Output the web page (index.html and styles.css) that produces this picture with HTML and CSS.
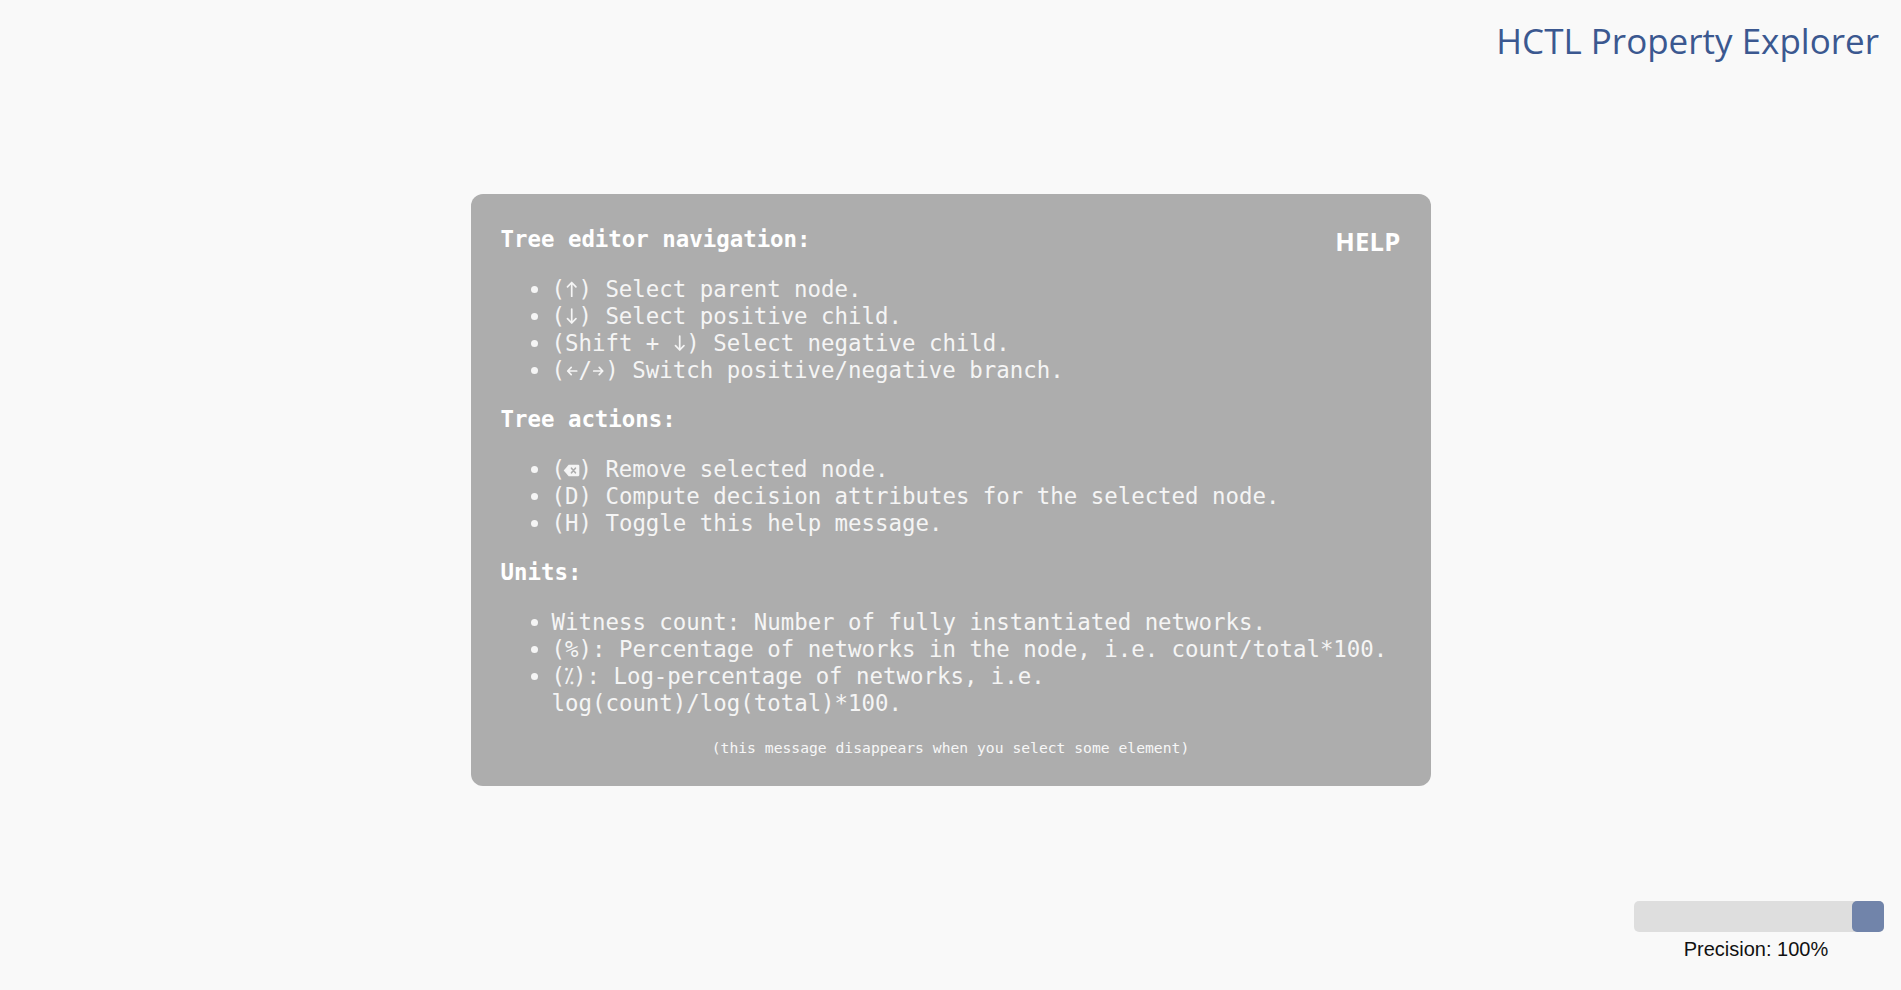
FILE: index.html
```html
<!DOCTYPE html>
<html lang="en">
<head>
<meta charset="utf-8">
<title>HCTL Property Explorer</title>
<link rel="stylesheet" href="styles.css">
</head>
<body>
<div class="page">
  <header class="header">
    <h1 class="app-title">HCTL Property Explorer</h1>
  </header>
  <main class="main">
    <section class="help">
      <div class="help-head">
        <h3 class="help-heading">Tree editor navigation:</h3>
        <span class="help-badge">HELP</span>
      </div>
      <ul class="help-list">
        <li>(<svg class="arrow" viewBox="0 0 12 16" aria-label="↑"><path d="M6 15.5 V1.5 M1.8 5.8 L6 1.5 L10.2 5.8"/></svg>) Select parent node.</li>
        <li>(<svg class="arrow" viewBox="0 0 12 16" aria-label="↓"><path d="M6 1 V15 M1.8 10.7 L6 15 L10.2 10.7"/></svg>) Select positive child.</li>
        <li>(Shift + <svg class="arrow" viewBox="0 0 12 16" aria-label="↓"><path d="M6 1 V15 M1.8 10.7 L6 15 L10.2 10.7"/></svg>) Select negative child.</li>
        <li>(<svg class="arrow" viewBox="0 0 12 16" aria-label="←"><path d="M11 9 H2 M5.5 5.3 L2 9 L5.5 12.7"/></svg>/<svg class="arrow" viewBox="0 0 12 16" aria-label="→"><path d="M1 9 H10 M6.5 5.3 L10 9 L6.5 12.7"/></svg>) Switch positive/negative branch.</li>
      </ul>
      <h3 class="help-heading">Tree actions:</h3>
      <ul class="help-list">
        <li>(<span class="key-icon"><svg viewBox="0 0 24 18" width="17" height="13"><path d="M8 1 H21.5 a1.5 1.5 0 0 1 1.5 1.5 V15.5 a1.5 1.5 0 0 1 -1.5 1.5 H8 L1 9 Z" fill="currentColor"/><path d="M12 5.8 L17.5 12.2 M17.5 5.8 L12 12.2" stroke="#adadad" stroke-width="2.4" stroke-linecap="round"/></svg></span>) Remove selected node.</li>
        <li>(D) Compute decision attributes for the selected node.</li>
        <li>(H) Toggle this help message.</li>
      </ul>
      <h3 class="help-heading">Units:</h3>
      <ul class="help-list">
        <li>Witness count: Number of fully instantiated networks.</li>
        <li>(%): Percentage of networks in the node, i.e. count/total*100.</li>
        <li>(⁒): Log-percentage of networks, i.e. log(count)/log(total)*100.</li>
      </ul>
      <p class="help-note">(this message disappears when you select some element)</p>
    </section>
  </main>
  <footer class="footer">
    <div class="precision">
      <div class="slider-track"><div class="slider-thumb"></div></div>
      <div class="precision-label">Precision: 100%</div>
    </div>
  </footer>
</div>
</body>
</html>
```

FILE: styles.css
```css
html, body {
  margin: 0;
  padding: 0;
}

body {
  background: #f9f9f9;
  font-family: "Open Sans", "Noto Sans", sans-serif;
}

.page {
  height: 100vh;
  display: flex;
  flex-direction: column;
  overflow: hidden;
}

.header {
  display: flex;
  justify-content: flex-end;
  padding: 18px 22px 0 0;
}

.app-title {
  margin: 0;
  font-family: "Open Sans", "Noto Sans", sans-serif;
  font-weight: 400;
  font-size: 35px;
  line-height: 46px;
  color: #3b5890;
}

.main {
  flex: 1;
  display: flex;
  justify-content: center;
  align-items: flex-start;
  padding-top: 130px;
}

.help {
  box-sizing: border-box;
  width: 960px;
  background: #adadad;
  border-radius: 12px;
  padding: 32.3px 30px 29.6px 30px;
  color: #f5f5f5;
  font-family: "DejaVu Sans Mono", "Liberation Mono", monospace;
  font-size: 22.4px;
  line-height: 27.05px;
}

.help-head {
  display: flex;
  justify-content: space-between;
  align-items: flex-start;
}

.help-heading {
  margin: 0;
  font-size: 22.4px;
  font-weight: 700;
  color: #ffffff;
  line-height: 27.05px;
}

.help-badge {
  font-family: "Open Sans", "Noto Sans", sans-serif;
  font-weight: 700;
  font-size: 25.6px;
  line-height: 26px;
  margin-top: 3px;
  margin-bottom: -3px;
  color: #ffffff;
  letter-spacing: 0.2px;
}

.help-list {
  margin: 22.4px 0;
  padding-left: 51px;
}

.help-list li {
  line-height: 27.05px;
}

.arrow {
  display: inline-block;
  width: 0.6em;
  height: 16px;
  vertical-align: 0;
  fill: none;
  stroke: currentColor;
  stroke-width: 1.7;
  stroke-linecap: round;
  stroke-linejoin: round;
}

.key-icon {
  display: inline-block;
  width: 0.6em;
  text-align: center;
  vertical-align: 0;
}

.key-icon svg {
  display: inline-block;
  margin-left: -2px;
  margin-right: -2px;
}

.help-note {
  margin: 20.6px 0 0 0;
  text-align: center;
  font-size: 14.7px;
  line-height: 17.6px;
  color: #f7f7f7;
}

.footer {
  display: flex;
  justify-content: flex-end;
  padding: 0 17px 29px 0;
}

.precision {
  display: flex;
  flex-direction: column;
  align-items: center;
  gap: 6px;
}

.slider-track {
  width: 250px;
  height: 31px;
  background: #dedede;
  border-radius: 5px;
  display: flex;
  justify-content: flex-end;
}

.slider-thumb {
  width: 32px;
  height: 31px;
  background: #7184aa;
  border-radius: 5px;
}

.precision-label {
  font-family: "Liberation Sans", Arial, sans-serif;
  font-size: 20px;
  line-height: 1.149;
  color: #111111;
  margin-right: 6px;
}
```
